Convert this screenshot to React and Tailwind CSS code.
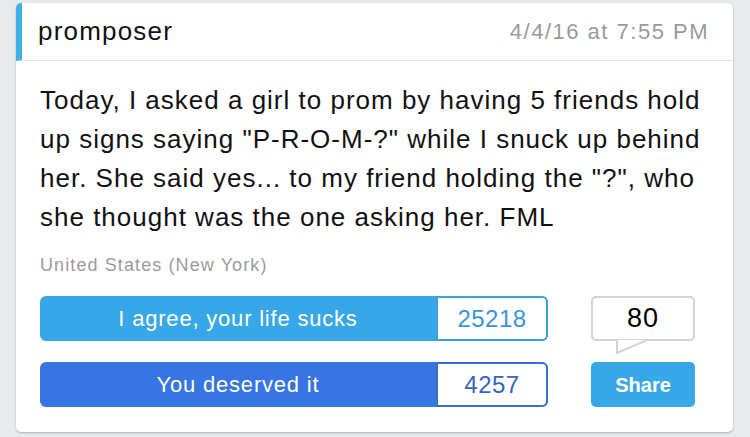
const VoteButton = ({ label, count, bg, border, text }) => (
  <div className={`flex h-[45px] w-[508px] overflow-hidden rounded-[6px] ${bg}`}>
    <div className="flex flex-1 items-center justify-center text-[22px] tracking-[0.8px] text-white">{label}</div>
    <div className={`flex w-[112px] items-center justify-center rounded-r-[6px] border-2 bg-white text-[24px] tracking-[0.5px] ${border} ${text}`}>
      {count}
    </div>
  </div>
)

export default function App() {
  return (
    <div
      className="h-[437px] w-[750px] overflow-hidden bg-[#e8ebee] pl-4 pt-[3px]"
      style={{ fontFamily: '"Liberation Sans", Arial, sans-serif' }}
    >
      <div className="w-[717px] overflow-hidden rounded-[5px] bg-white shadow-[0_1px_2px_rgba(0,0,0,0.25)]">
        {/* header */}
        <div className="flex h-[58px] items-center justify-between border-b border-[#e3e6e9] border-l-[6px] border-l-[#3fb0ea] pl-4 pr-6">
          <span className="text-[26px] tracking-[1.2px] text-[#111]">promposer</span>
          <span className="text-[22px] tracking-[1.5px] text-[#9a9a9a]">4/4/16 at 7:55 PM</span>
        </div>

        <div className="pb-[25px] pl-6 pr-4 pt-[20px]">
          <p className="text-[26px] leading-[39px] tracking-[1px] text-[#111]">
            Today, I asked a girl to prom by having 5 friends hold up signs saying "P-R-O-M-?" while I snuck up behind
            her. She said yes... to my friend holding the "?", who she thought was the one asking her. FML
          </p>
          <p className="mt-[16px] text-[18px] leading-[24px] tracking-[1.1px] text-[#9b9b9b]">United States (New York)</p>

          <div className="mt-[19px] flex gap-[43px]">
            <div className="flex flex-col gap-[21px]">
              <VoteButton
                label="I agree, your life sucks"
                count="25218"
                bg="bg-[#37a7e8]"
                border="border-[#3aa2e0]"
                text="text-[#3a95d6]"
              />
              <VoteButton
                label="You deserved it"
                count="4257"
                bg="bg-[#3675e2]"
                border="border-[#3a6fd0]"
                text="text-[#3566c4]"
              />
            </div>

            <div className="flex flex-col gap-[21px]">
              <div className="relative flex h-[45px] w-[104px] items-center justify-center rounded-[5px] border-2 border-[#d4d4d4] bg-white text-[27px] tracking-[1px] text-black">
                80
                <svg className="absolute left-[22px] top-[41px]" width="34" height="16" viewBox="0 0 34 16">
                  <path d="M0 1 L2 1 L2 14 L32 1 L34 1" fill="white" stroke="#d4d4d4" strokeWidth="2" />
                </svg>
              </div>
              <div className="flex h-[45px] w-[104px] items-center justify-center rounded-[5px] bg-[#37a7e8] text-[20px] font-bold text-white">
                Share
              </div>
            </div>
          </div>
        </div>
      </div>
    </div>
  )
}
